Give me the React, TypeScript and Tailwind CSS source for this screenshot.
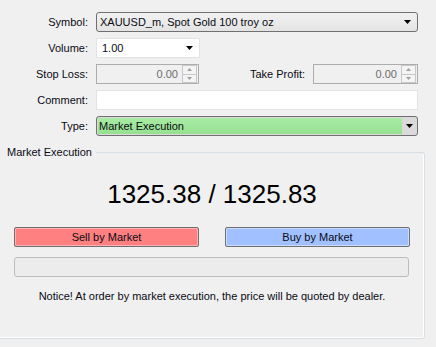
import React from 'react'

function Arrow({ className = '' }: { className?: string }) {
  return (
    <svg width="7" height="4" viewBox="0 0 7 4" className={className}>
      <path d="M0 0h7L3.5 4z" fill="#000" />
    </svg>
  )
}

function Spinner() {
  return (
    <div className="ml-auto mr-[1px] flex h-[18px] w-[15px] flex-col border border-[#c8c8c8] bg-[#f4f4f4]">
      <div className="flex flex-1 items-center justify-center border-b border-[#c8c8c8]">
        <svg width="5" height="3" viewBox="0 0 5 3"><path d="M0 3h5L2.5 0z" fill="#a0a0a0" /></svg>
      </div>
      <div className="flex flex-1 items-center justify-center">
        <svg width="5" height="3" viewBox="0 0 5 3"><path d="M0 0h5L2.5 3z" fill="#a0a0a0" /></svg>
      </div>
    </div>
  )
}

function SpinBox({ value, width }: { value: string; width: string }) {
  return (
    <div className={`flex h-[20px] items-center border border-[#adadad] bg-[#f0f0f0] ${width}`}>
      <span className="flex-1 pr-[4px] text-right text-[#6d6d6d]">{value}</span>
      <Spinner />
    </div>
  )
}

export default function App() {
  return (
    <div className="h-[347px] w-[436px] overflow-hidden bg-[#f0f0f0] font-['Liberation_Sans',Arial,sans-serif] text-[11px] leading-[13px] text-[#0a0a14]">
      <div className="flex flex-col gap-[6px] pt-[12px]">
        <div className="flex h-[20px] items-center">
          <div className="w-[88px] text-right">Symbol:</div>
          <div className="ml-[8px] flex h-[20px] w-[322px] items-center rounded-[3px] border border-[#707070] bg-gradient-to-b from-[#f2f2f2] to-[#e3e3e3] pl-[3px] pr-[6px]">
            <span className="flex-1">XAUUSD_m, Spot Gold 100 troy oz</span>
            <Arrow />
          </div>
        </div>

        <div className="flex h-[20px] items-center">
          <div className="w-[88px] text-right">Volume:</div>
          <div className="ml-[8px] flex h-[20px] w-[104px] items-center border border-[#e3e3e3] bg-white pl-[5px] pr-[6px]">
            <span className="flex-1">1.00</span>
            <Arrow />
          </div>
        </div>

        <div className="flex h-[20px] items-center">
          <div className="w-[88px] text-right">Stop Loss:</div>
          <div className="ml-[8px]">
            <SpinBox value="0.00" width="w-[103px]" />
          </div>
          <div className="w-[106px] text-right">Take Profit:</div>
          <div className="ml-[8px]">
            <SpinBox value="0.00" width="w-[105px]" />
          </div>
        </div>

        <div className="flex h-[20px] items-center">
          <div className="w-[88px] text-right">Comment:</div>
          <div className="ml-[8px] h-[20px] w-[322px] border border-[#e3e3e3] bg-white" />
        </div>

        <div className="flex h-[20px] items-center">
          <div className="w-[88px] text-right">Type:</div>
          <div className="ml-[8px] flex h-[20px] w-[322px] items-stretch rounded-[3px] border border-[#707070] bg-[#dadada] p-[1px]">
            <div className="flex flex-1 items-center bg-gradient-to-b from-[#a8eca4] to-[#96e090] pl-[1px]">Market Execution</div>
            <div className="flex w-[14px] items-center justify-center">
              <Arrow />
            </div>
          </div>
        </div>
      </div>

      <fieldset className="mt-[10px] h-[193px] w-[425px] rounded-r-[3px] border border-l-0 border-[#d5dfe5] px-[14px] shadow-[inset_-1px_-1px_0_#fff]">
        <legend className="ml-[-14px] bg-[#f0f0f0] pl-[7px] pr-[4px]">Market Execution</legend>
        <div className="mt-[20px] text-center text-[26px] leading-[30px] text-black">1325.38 / 1325.83</div>
        <div className="mt-[18px] flex justify-between">
          <button className="h-[20px] w-[185px] rounded-[2px] border border-[#707070] bg-[#ff8080] shadow-[inset_0_0_0_1px_#ffb0b0]">
            Sell by Market
          </button>
          <button className="h-[20px] w-[185px] rounded-[2px] border border-[#707070] bg-[#a0c0ff] shadow-[inset_0_0_0_1px_#c8dcff]">
            Buy by Market
          </button>
        </div>
        <div className="mt-[10px] h-[20px] w-[395px] rounded-[3px] border border-[#bcbcbc] bg-[#ececec]" />
        <div className="mt-[13px] text-center">Notice! At order by market execution, the price will be quoted by dealer.</div>
      </fieldset>
    </div>
  )
}
